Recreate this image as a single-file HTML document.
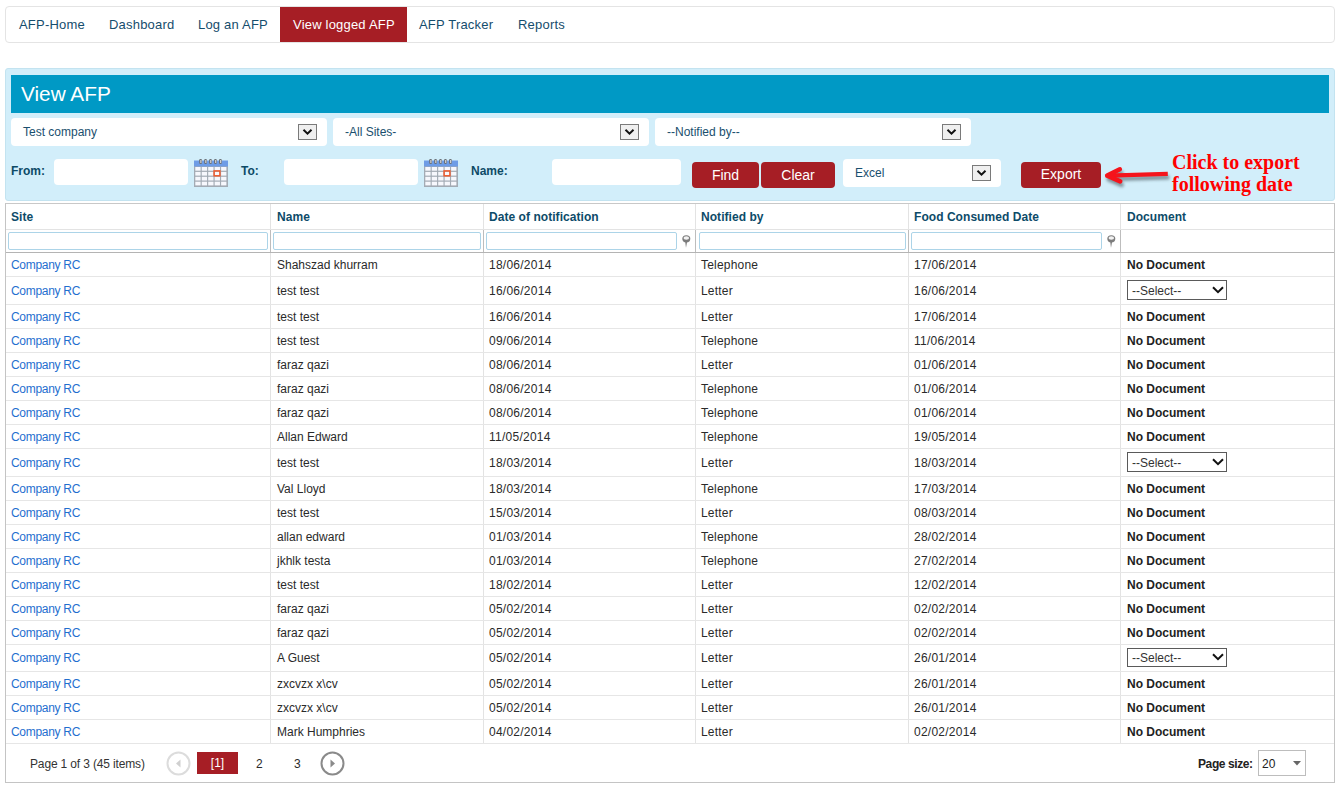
<!DOCTYPE html>
<html><head><meta charset="utf-8">
<style>
*{box-sizing:border-box;margin:0;padding:0}
html,body{width:1344px;height:788px;overflow:hidden;background:#fff;font-family:"Liberation Sans",sans-serif}
.abs{position:absolute}
#nav{left:5px;top:6px;width:1330px;height:37px;border:1px solid #e4e4e4;border-radius:4px;background:#fff}
.ni{position:absolute;top:0;height:35px;line-height:35px;font-size:13px;color:#154d6d;white-space:nowrap;letter-spacing:0.2px}
#tab{position:absolute;left:274px;top:0;width:127px;height:35px;background:#a61e25}
#panel{left:5px;top:68px;width:1330px;height:133px;background:#d2eefa;border:1px solid #c3e3f0;border-radius:3px}
#hdr{left:11px;top:75px;width:1318px;height:38px;background:#0099c5}
#hdr span{position:absolute;left:10px;top:0;line-height:38px;font-size:20.8px;color:#fff}
.sel{position:absolute;background:#fff;border-radius:4px;font-size:12px;color:#1a4f6e}
.sel .t{position:absolute;left:12px;top:0}
.dd{position:absolute;width:19px;height:16px;border:1px solid #7a7a7a;background:#efefef}
.dd svg{position:absolute;left:3px;top:3px}
.inp{position:absolute;background:#fff;border-radius:4px}
.lbl{position:absolute;font-size:12px;font-weight:bold;color:#0d4a66}
.btn{position:absolute;background:#a61e25;border-radius:4px;color:#fff;font-size:14px;text-align:center}
#note{left:1172px;top:151px;font-family:"Liberation Serif",serif;font-weight:bold;font-size:20px;line-height:22px;color:#f00}
#grid{left:5px;top:203px;width:1330px;height:580px;border:1px solid #c4c4c4;border-top-color:#c8c8c8;background:#fff}
.vl{position:absolute;top:0;width:1px;background:#e2e2e2}
.hl{position:absolute;left:0;height:1px;background:#e6e6e6}
.c{position:absolute;font-size:12px;color:#2a2a2a;white-space:nowrap;letter-spacing:-0.2px}
.h{position:absolute;font-size:12px;font-weight:bold;color:#0d4b69;white-space:nowrap;letter-spacing:0.05px}
.fi{position:absolute;height:18px;border:1px solid #acd4e8;border-radius:2px;background:#fff}
.lnk{color:#1f6fcf}
.nd{font-weight:bold;color:#222;letter-spacing:0}
.ds{position:absolute;width:100px;height:20px;border:1px solid #5a5a5a;background:#fff;font-size:12px;color:#333}
</style></head><body>
<div id="nav" class="abs">
  <div class="ni" style="left:13px">AFP-Home</div>
  <div class="ni" style="left:103px">Dashboard</div>
  <div class="ni" style="left:192px">Log an AFP</div>
  <div id="tab"></div>
  <div class="ni" style="left:287px;color:#fff">View logged AFP</div>
  <div class="ni" style="left:413px">AFP Tracker</div>
  <div class="ni" style="left:512px">Reports</div>
</div>

<div id="panel" class="abs"></div>
<div id="hdr" class="abs"><span>View AFP</span></div>

<div id="filters"><div class="sel" style="left:11px;top:118px;width:316px;height:28px;line-height:28px"><span class="t">Test company</span><div class="dd" style="left:287px;top:6px"><svg width="11" height="8" viewBox="0 0 11 8"><path d="M1.5 1.8 L5.5 5.6 L9.5 1.8" fill="none" stroke="#111" stroke-width="2"/></svg></div></div><div class="sel" style="left:333px;top:118px;width:316px;height:28px;line-height:28px"><span class="t">-All Sites-</span><div class="dd" style="left:287px;top:6px"><svg width="11" height="8" viewBox="0 0 11 8"><path d="M1.5 1.8 L5.5 5.6 L9.5 1.8" fill="none" stroke="#111" stroke-width="2"/></svg></div></div><div class="sel" style="left:655px;top:118px;width:316px;height:28px;line-height:28px"><span class="t">--Notified by--</span><div class="dd" style="left:287px;top:6px"><svg width="11" height="8" viewBox="0 0 11 8"><path d="M1.5 1.8 L5.5 5.6 L9.5 1.8" fill="none" stroke="#111" stroke-width="2"/></svg></div></div><div class="lbl" style="left:11px;top:164px">From:</div><div class="inp" style="left:54px;top:159px;width:134px;height:26px"></div><div class="abs" style="left:194px;top:159px"><svg width="34" height="28" viewBox="0 0 34 28"><rect x="0" y="6" width="34" height="22" fill="#a3abb4"/><rect x="0" y="1.5" width="34" height="6" fill="#6e9ce6"/><g fill="#f7f8fd"><rect x="1.30" y="8.00" width="5.3" height="3.7"/><rect x="7.75" y="8.00" width="5.3" height="3.7"/><rect x="14.20" y="8.00" width="5.3" height="3.7"/><rect x="20.65" y="8.00" width="5.3" height="3.7"/><rect x="27.10" y="8.00" width="5.3" height="3.7"/><rect x="1.30" y="12.90" width="5.3" height="3.7"/><rect x="7.75" y="12.90" width="5.3" height="3.7"/><rect x="14.20" y="12.90" width="5.3" height="3.7"/><rect x="20.65" y="12.90" width="5.3" height="3.7"/><rect x="27.10" y="12.90" width="5.3" height="3.7"/><rect x="1.30" y="17.80" width="5.3" height="3.7"/><rect x="7.75" y="17.80" width="5.3" height="3.7"/><rect x="14.20" y="17.80" width="5.3" height="3.7"/><rect x="20.65" y="17.80" width="5.3" height="3.7"/><rect x="27.10" y="17.80" width="5.3" height="3.7"/><rect x="1.30" y="22.70" width="5.3" height="3.7"/><rect x="7.75" y="22.70" width="5.3" height="3.7"/><rect x="14.20" y="22.70" width="5.3" height="3.7"/><rect x="20.65" y="22.70" width="5.3" height="3.7"/><rect x="27.10" y="22.70" width="5.3" height="3.7"/></g><rect x="20.1" y="11.9" width="5.8" height="4.9" fill="none" stroke="#ef5b2e" stroke-width="1.5"/><g fill="#6b7077"><rect x="5.20" y="0" width="2.8" height="5" rx="1.3"/><rect x="10.15" y="0" width="2.8" height="5" rx="1.3"/><rect x="15.10" y="0" width="2.8" height="5" rx="1.3"/><rect x="20.05" y="0" width="2.8" height="5" rx="1.3"/><rect x="25.00" y="0" width="2.8" height="5" rx="1.3"/></g><g fill="#e8e8e8"><rect x="6.40" y="1" width="1" height="3" /><rect x="11.35" y="1" width="1" height="3" /><rect x="16.30" y="1" width="1" height="3" /><rect x="21.25" y="1" width="1" height="3" /><rect x="26.20" y="1" width="1" height="3" /></g></svg></div><div class="lbl" style="left:241px;top:164px">To:</div><div class="inp" style="left:284px;top:159px;width:134px;height:26px"></div><div class="abs" style="left:424px;top:159px"><svg width="34" height="28" viewBox="0 0 34 28"><rect x="0" y="6" width="34" height="22" fill="#a3abb4"/><rect x="0" y="1.5" width="34" height="6" fill="#6e9ce6"/><g fill="#f7f8fd"><rect x="1.30" y="8.00" width="5.3" height="3.7"/><rect x="7.75" y="8.00" width="5.3" height="3.7"/><rect x="14.20" y="8.00" width="5.3" height="3.7"/><rect x="20.65" y="8.00" width="5.3" height="3.7"/><rect x="27.10" y="8.00" width="5.3" height="3.7"/><rect x="1.30" y="12.90" width="5.3" height="3.7"/><rect x="7.75" y="12.90" width="5.3" height="3.7"/><rect x="14.20" y="12.90" width="5.3" height="3.7"/><rect x="20.65" y="12.90" width="5.3" height="3.7"/><rect x="27.10" y="12.90" width="5.3" height="3.7"/><rect x="1.30" y="17.80" width="5.3" height="3.7"/><rect x="7.75" y="17.80" width="5.3" height="3.7"/><rect x="14.20" y="17.80" width="5.3" height="3.7"/><rect x="20.65" y="17.80" width="5.3" height="3.7"/><rect x="27.10" y="17.80" width="5.3" height="3.7"/><rect x="1.30" y="22.70" width="5.3" height="3.7"/><rect x="7.75" y="22.70" width="5.3" height="3.7"/><rect x="14.20" y="22.70" width="5.3" height="3.7"/><rect x="20.65" y="22.70" width="5.3" height="3.7"/><rect x="27.10" y="22.70" width="5.3" height="3.7"/></g><rect x="20.1" y="11.9" width="5.8" height="4.9" fill="none" stroke="#ef5b2e" stroke-width="1.5"/><g fill="#6b7077"><rect x="5.20" y="0" width="2.8" height="5" rx="1.3"/><rect x="10.15" y="0" width="2.8" height="5" rx="1.3"/><rect x="15.10" y="0" width="2.8" height="5" rx="1.3"/><rect x="20.05" y="0" width="2.8" height="5" rx="1.3"/><rect x="25.00" y="0" width="2.8" height="5" rx="1.3"/></g><g fill="#e8e8e8"><rect x="6.40" y="1" width="1" height="3" /><rect x="11.35" y="1" width="1" height="3" /><rect x="16.30" y="1" width="1" height="3" /><rect x="21.25" y="1" width="1" height="3" /><rect x="26.20" y="1" width="1" height="3" /></g></svg></div><div class="lbl" style="left:471px;top:164px">Name:</div><div class="inp" style="left:552px;top:159px;width:129px;height:26px"></div><div class="btn" style="left:692px;top:162px;width:67px;height:26px;line-height:26px">Find</div><div class="btn" style="left:761px;top:162px;width:74px;height:26px;line-height:26px">Clear</div><div class="sel" style="left:843px;top:159px;width:158px;height:28px;line-height:28px"><span class="t">Excel</span><div class="dd" style="left:129px;top:6px"><svg width="11" height="8" viewBox="0 0 11 8"><path d="M1.5 1.8 L5.5 5.6 L9.5 1.8" fill="none" stroke="#111" stroke-width="2"/></svg></div></div><div class="btn" style="left:1021px;top:162px;width:80px;height:26px;line-height:24px">Export</div><svg class="abs" style="left:1100px;top:160px" width="75" height="30" viewBox="0 0 75 30">
<defs><filter id="sh" x="-20%" y="-60%" width="140%" height="220%"><feGaussianBlur stdDeviation="1.8"/></filter></defs>
<g transform="translate(1.5,3.5)" filter="url(#sh)" opacity="0.55" fill="none" stroke="#3a4a50"><path d="M67.8 13.8 L9 15.6" stroke-width="4.2"/><path d="M19.8 9.3 L7.2 15.6 L20.2 21.4" stroke-width="4.6" stroke-linecap="round" stroke-linejoin="round"/></g>
<g fill="none" stroke="#f5141c"><path d="M67.8 13.8 L9 15.6" stroke-width="4.2"/><path d="M19.8 9.3 L7.2 15.6 L20.2 21.4" stroke-width="4.6" stroke-linecap="round" stroke-linejoin="round"/></g>
</svg></div>
<div id="note" class="abs">Click to export<br>following date</div>
<div id="grid" class="abs"></div>
<div class="h" style="left:11px;top:204px;height:26px;line-height:27px">Site</div><div class="h" style="left:277px;top:204px;height:26px;line-height:27px">Name</div><div class="h" style="left:489px;top:204px;height:26px;line-height:27px">Date of notification</div><div class="h" style="left:701px;top:204px;height:26px;line-height:27px">Notified by</div><div class="h" style="left:914px;top:204px;height:26px;line-height:27px">Food Consumed Date</div><div class="h" style="left:1127px;top:204px;height:26px;line-height:27px">Document</div><div class="abs" style="left:270px;top:204px;width:1px;height:540px;background:#e3e3e3"></div><div class="abs" style="left:483px;top:204px;width:1px;height:540px;background:#e3e3e3"></div><div class="abs" style="left:695px;top:204px;width:1px;height:540px;background:#e3e3e3"></div><div class="abs" style="left:908px;top:204px;width:1px;height:540px;background:#e3e3e3"></div><div class="abs" style="left:1120px;top:204px;width:1px;height:540px;background:#e3e3e3"></div><div class="abs" style="left:6px;top:229px;width:1328px;height:1px;background:#e3e3e3"></div><div class="fi" style="left:8px;top:232px;width:260px"></div><div class="fi" style="left:273px;top:232px;width:208px"></div><div class="fi" style="left:486px;top:232px;width:191px"></div><div class="fi" style="left:699px;top:232px;width:207px"></div><div class="fi" style="left:911px;top:232px;width:191px"></div><div class="abs" style="left:682px;top:235px"><svg width="10" height="14" viewBox="0 0 10 14"><ellipse cx="4.3" cy="3.8" rx="4" ry="3.6" fill="#7c7c7c"/><ellipse cx="4.3" cy="3.0" rx="2.8" ry="1.7" fill="#f2f2f2"/><path d="M3.1 5.8 L5.3 5.8 L4 12.8Z" fill="#7c7c7c"/></svg></div><div class="abs" style="left:1107px;top:235px"><svg width="10" height="14" viewBox="0 0 10 14"><ellipse cx="4.3" cy="3.8" rx="4" ry="3.6" fill="#7c7c7c"/><ellipse cx="4.3" cy="3.0" rx="2.8" ry="1.7" fill="#f2f2f2"/><path d="M3.1 5.8 L5.3 5.8 L4 12.8Z" fill="#7c7c7c"/></svg></div><div class="abs" style="left:6px;top:252px;width:1328px;height:1px;background:#b4b4b4"></div><div class="abs" style="left:270px;top:230px;width:1px;height:22px;background:#bdbdbd"></div><div class="abs" style="left:483px;top:230px;width:1px;height:22px;background:#bdbdbd"></div><div class="abs" style="left:695px;top:230px;width:1px;height:22px;background:#bdbdbd"></div><div class="abs" style="left:908px;top:230px;width:1px;height:22px;background:#bdbdbd"></div><div class="abs" style="left:1120px;top:230px;width:1px;height:22px;background:#bdbdbd"></div><div class="c lnk" style="left:11px;top:253px;height:24px;line-height:24px;letter-spacing:-0.3px">Company RC</div><div class="c " style="left:277px;top:253px;height:24px;line-height:24px;letter-spacing:0px">Shahszad khurram</div><div class="c " style="left:489px;top:253px;height:24px;line-height:24px;letter-spacing:0.25px">18/06/2014</div><div class="c " style="left:701px;top:253px;height:24px;line-height:24px;letter-spacing:0.2px">Telephone</div><div class="c " style="left:914px;top:253px;height:24px;line-height:24px;letter-spacing:0.25px">17/06/2014</div><div class="c nd" style="left:1127px;top:253px;height:24px;line-height:24px;letter-spacing:0px">No Document</div><div class="abs" style="left:6px;top:276px;width:1328px;height:1px;background:#e6e6e6"></div><div class="c lnk" style="left:11px;top:277px;height:28px;line-height:28px;letter-spacing:-0.3px">Company RC</div><div class="c " style="left:277px;top:277px;height:28px;line-height:28px;letter-spacing:0px">test test</div><div class="c " style="left:489px;top:277px;height:28px;line-height:28px;letter-spacing:0.25px">16/06/2014</div><div class="c " style="left:701px;top:277px;height:28px;line-height:28px;letter-spacing:0.2px">Letter</div><div class="c " style="left:914px;top:277px;height:28px;line-height:28px;letter-spacing:0.25px">16/06/2014</div><div class="ds" style="left:1127px;top:280px;height:20px"><span style="position:absolute;left:4px;top:1px;line-height:18px">--Select--</span><svg style="position:absolute;left:84px;top:5px" width="12" height="8" viewBox="0 0 12 8"><path d="M1 1.2 L6 6.2 L11 1.2" fill="none" stroke="#111" stroke-width="2"/></svg></div><div class="abs" style="left:6px;top:304px;width:1328px;height:1px;background:#e6e6e6"></div><div class="c lnk" style="left:11px;top:305px;height:24px;line-height:24px;letter-spacing:-0.3px">Company RC</div><div class="c " style="left:277px;top:305px;height:24px;line-height:24px;letter-spacing:0px">test test</div><div class="c " style="left:489px;top:305px;height:24px;line-height:24px;letter-spacing:0.25px">16/06/2014</div><div class="c " style="left:701px;top:305px;height:24px;line-height:24px;letter-spacing:0.2px">Letter</div><div class="c " style="left:914px;top:305px;height:24px;line-height:24px;letter-spacing:0.25px">17/06/2014</div><div class="c nd" style="left:1127px;top:305px;height:24px;line-height:24px;letter-spacing:0px">No Document</div><div class="abs" style="left:6px;top:328px;width:1328px;height:1px;background:#e6e6e6"></div><div class="c lnk" style="left:11px;top:329px;height:24px;line-height:24px;letter-spacing:-0.3px">Company RC</div><div class="c " style="left:277px;top:329px;height:24px;line-height:24px;letter-spacing:0px">test test</div><div class="c " style="left:489px;top:329px;height:24px;line-height:24px;letter-spacing:0.25px">09/06/2014</div><div class="c " style="left:701px;top:329px;height:24px;line-height:24px;letter-spacing:0.2px">Telephone</div><div class="c " style="left:914px;top:329px;height:24px;line-height:24px;letter-spacing:0.25px">11/06/2014</div><div class="c nd" style="left:1127px;top:329px;height:24px;line-height:24px;letter-spacing:0px">No Document</div><div class="abs" style="left:6px;top:352px;width:1328px;height:1px;background:#e6e6e6"></div><div class="c lnk" style="left:11px;top:353px;height:24px;line-height:24px;letter-spacing:-0.3px">Company RC</div><div class="c " style="left:277px;top:353px;height:24px;line-height:24px;letter-spacing:0px">faraz qazi</div><div class="c " style="left:489px;top:353px;height:24px;line-height:24px;letter-spacing:0.25px">08/06/2014</div><div class="c " style="left:701px;top:353px;height:24px;line-height:24px;letter-spacing:0.2px">Letter</div><div class="c " style="left:914px;top:353px;height:24px;line-height:24px;letter-spacing:0.25px">01/06/2014</div><div class="c nd" style="left:1127px;top:353px;height:24px;line-height:24px;letter-spacing:0px">No Document</div><div class="abs" style="left:6px;top:376px;width:1328px;height:1px;background:#e6e6e6"></div><div class="c lnk" style="left:11px;top:377px;height:24px;line-height:24px;letter-spacing:-0.3px">Company RC</div><div class="c " style="left:277px;top:377px;height:24px;line-height:24px;letter-spacing:0px">faraz qazi</div><div class="c " style="left:489px;top:377px;height:24px;line-height:24px;letter-spacing:0.25px">08/06/2014</div><div class="c " style="left:701px;top:377px;height:24px;line-height:24px;letter-spacing:0.2px">Telephone</div><div class="c " style="left:914px;top:377px;height:24px;line-height:24px;letter-spacing:0.25px">01/06/2014</div><div class="c nd" style="left:1127px;top:377px;height:24px;line-height:24px;letter-spacing:0px">No Document</div><div class="abs" style="left:6px;top:400px;width:1328px;height:1px;background:#e6e6e6"></div><div class="c lnk" style="left:11px;top:401px;height:24px;line-height:24px;letter-spacing:-0.3px">Company RC</div><div class="c " style="left:277px;top:401px;height:24px;line-height:24px;letter-spacing:0px">faraz qazi</div><div class="c " style="left:489px;top:401px;height:24px;line-height:24px;letter-spacing:0.25px">08/06/2014</div><div class="c " style="left:701px;top:401px;height:24px;line-height:24px;letter-spacing:0.2px">Telephone</div><div class="c " style="left:914px;top:401px;height:24px;line-height:24px;letter-spacing:0.25px">01/06/2014</div><div class="c nd" style="left:1127px;top:401px;height:24px;line-height:24px;letter-spacing:0px">No Document</div><div class="abs" style="left:6px;top:424px;width:1328px;height:1px;background:#e6e6e6"></div><div class="c lnk" style="left:11px;top:425px;height:24px;line-height:24px;letter-spacing:-0.3px">Company RC</div><div class="c " style="left:277px;top:425px;height:24px;line-height:24px;letter-spacing:0px">Allan Edward</div><div class="c " style="left:489px;top:425px;height:24px;line-height:24px;letter-spacing:0.25px">11/05/2014</div><div class="c " style="left:701px;top:425px;height:24px;line-height:24px;letter-spacing:0.2px">Telephone</div><div class="c " style="left:914px;top:425px;height:24px;line-height:24px;letter-spacing:0.25px">19/05/2014</div><div class="c nd" style="left:1127px;top:425px;height:24px;line-height:24px;letter-spacing:0px">No Document</div><div class="abs" style="left:6px;top:448px;width:1328px;height:1px;background:#e6e6e6"></div><div class="c lnk" style="left:11px;top:449px;height:28px;line-height:28px;letter-spacing:-0.3px">Company RC</div><div class="c " style="left:277px;top:449px;height:28px;line-height:28px;letter-spacing:0px">test test</div><div class="c " style="left:489px;top:449px;height:28px;line-height:28px;letter-spacing:0.25px">18/03/2014</div><div class="c " style="left:701px;top:449px;height:28px;line-height:28px;letter-spacing:0.2px">Letter</div><div class="c " style="left:914px;top:449px;height:28px;line-height:28px;letter-spacing:0.25px">18/03/2014</div><div class="ds" style="left:1127px;top:452px;height:20px"><span style="position:absolute;left:4px;top:1px;line-height:18px">--Select--</span><svg style="position:absolute;left:84px;top:5px" width="12" height="8" viewBox="0 0 12 8"><path d="M1 1.2 L6 6.2 L11 1.2" fill="none" stroke="#111" stroke-width="2"/></svg></div><div class="abs" style="left:6px;top:476px;width:1328px;height:1px;background:#e6e6e6"></div><div class="c lnk" style="left:11px;top:477px;height:24px;line-height:24px;letter-spacing:-0.3px">Company RC</div><div class="c " style="left:277px;top:477px;height:24px;line-height:24px;letter-spacing:0px">Val Lloyd</div><div class="c " style="left:489px;top:477px;height:24px;line-height:24px;letter-spacing:0.25px">18/03/2014</div><div class="c " style="left:701px;top:477px;height:24px;line-height:24px;letter-spacing:0.2px">Telephone</div><div class="c " style="left:914px;top:477px;height:24px;line-height:24px;letter-spacing:0.25px">17/03/2014</div><div class="c nd" style="left:1127px;top:477px;height:24px;line-height:24px;letter-spacing:0px">No Document</div><div class="abs" style="left:6px;top:500px;width:1328px;height:1px;background:#e6e6e6"></div><div class="c lnk" style="left:11px;top:501px;height:24px;line-height:24px;letter-spacing:-0.3px">Company RC</div><div class="c " style="left:277px;top:501px;height:24px;line-height:24px;letter-spacing:0px">test test</div><div class="c " style="left:489px;top:501px;height:24px;line-height:24px;letter-spacing:0.25px">15/03/2014</div><div class="c " style="left:701px;top:501px;height:24px;line-height:24px;letter-spacing:0.2px">Letter</div><div class="c " style="left:914px;top:501px;height:24px;line-height:24px;letter-spacing:0.25px">08/03/2014</div><div class="c nd" style="left:1127px;top:501px;height:24px;line-height:24px;letter-spacing:0px">No Document</div><div class="abs" style="left:6px;top:524px;width:1328px;height:1px;background:#e6e6e6"></div><div class="c lnk" style="left:11px;top:525px;height:24px;line-height:24px;letter-spacing:-0.3px">Company RC</div><div class="c " style="left:277px;top:525px;height:24px;line-height:24px;letter-spacing:0px">allan edward</div><div class="c " style="left:489px;top:525px;height:24px;line-height:24px;letter-spacing:0.25px">01/03/2014</div><div class="c " style="left:701px;top:525px;height:24px;line-height:24px;letter-spacing:0.2px">Telephone</div><div class="c " style="left:914px;top:525px;height:24px;line-height:24px;letter-spacing:0.25px">28/02/2014</div><div class="c nd" style="left:1127px;top:525px;height:24px;line-height:24px;letter-spacing:0px">No Document</div><div class="abs" style="left:6px;top:548px;width:1328px;height:1px;background:#e6e6e6"></div><div class="c lnk" style="left:11px;top:549px;height:24px;line-height:24px;letter-spacing:-0.3px">Company RC</div><div class="c " style="left:277px;top:549px;height:24px;line-height:24px;letter-spacing:0px">jkhlk testa</div><div class="c " style="left:489px;top:549px;height:24px;line-height:24px;letter-spacing:0.25px">01/03/2014</div><div class="c " style="left:701px;top:549px;height:24px;line-height:24px;letter-spacing:0.2px">Telephone</div><div class="c " style="left:914px;top:549px;height:24px;line-height:24px;letter-spacing:0.25px">27/02/2014</div><div class="c nd" style="left:1127px;top:549px;height:24px;line-height:24px;letter-spacing:0px">No Document</div><div class="abs" style="left:6px;top:572px;width:1328px;height:1px;background:#e6e6e6"></div><div class="c lnk" style="left:11px;top:573px;height:24px;line-height:24px;letter-spacing:-0.3px">Company RC</div><div class="c " style="left:277px;top:573px;height:24px;line-height:24px;letter-spacing:0px">test test</div><div class="c " style="left:489px;top:573px;height:24px;line-height:24px;letter-spacing:0.25px">18/02/2014</div><div class="c " style="left:701px;top:573px;height:24px;line-height:24px;letter-spacing:0.2px">Letter</div><div class="c " style="left:914px;top:573px;height:24px;line-height:24px;letter-spacing:0.25px">12/02/2014</div><div class="c nd" style="left:1127px;top:573px;height:24px;line-height:24px;letter-spacing:0px">No Document</div><div class="abs" style="left:6px;top:596px;width:1328px;height:1px;background:#e6e6e6"></div><div class="c lnk" style="left:11px;top:597px;height:24px;line-height:24px;letter-spacing:-0.3px">Company RC</div><div class="c " style="left:277px;top:597px;height:24px;line-height:24px;letter-spacing:0px">faraz qazi</div><div class="c " style="left:489px;top:597px;height:24px;line-height:24px;letter-spacing:0.25px">05/02/2014</div><div class="c " style="left:701px;top:597px;height:24px;line-height:24px;letter-spacing:0.2px">Letter</div><div class="c " style="left:914px;top:597px;height:24px;line-height:24px;letter-spacing:0.25px">02/02/2014</div><div class="c nd" style="left:1127px;top:597px;height:24px;line-height:24px;letter-spacing:0px">No Document</div><div class="abs" style="left:6px;top:620px;width:1328px;height:1px;background:#e6e6e6"></div><div class="c lnk" style="left:11px;top:621px;height:24px;line-height:24px;letter-spacing:-0.3px">Company RC</div><div class="c " style="left:277px;top:621px;height:24px;line-height:24px;letter-spacing:0px">faraz qazi</div><div class="c " style="left:489px;top:621px;height:24px;line-height:24px;letter-spacing:0.25px">05/02/2014</div><div class="c " style="left:701px;top:621px;height:24px;line-height:24px;letter-spacing:0.2px">Letter</div><div class="c " style="left:914px;top:621px;height:24px;line-height:24px;letter-spacing:0.25px">02/02/2014</div><div class="c nd" style="left:1127px;top:621px;height:24px;line-height:24px;letter-spacing:0px">No Document</div><div class="abs" style="left:6px;top:644px;width:1328px;height:1px;background:#e6e6e6"></div><div class="c lnk" style="left:11px;top:645px;height:27px;line-height:27px;letter-spacing:-0.3px">Company RC</div><div class="c " style="left:277px;top:645px;height:27px;line-height:27px;letter-spacing:0px">A Guest</div><div class="c " style="left:489px;top:645px;height:27px;line-height:27px;letter-spacing:0.25px">05/02/2014</div><div class="c " style="left:701px;top:645px;height:27px;line-height:27px;letter-spacing:0.2px">Letter</div><div class="c " style="left:914px;top:645px;height:27px;line-height:27px;letter-spacing:0.25px">26/01/2014</div><div class="ds" style="left:1127px;top:648px;height:19px"><span style="position:absolute;left:4px;top:0px;line-height:18px">--Select--</span><svg style="position:absolute;left:84px;top:4px" width="12" height="8" viewBox="0 0 12 8"><path d="M1 1.2 L6 6.2 L11 1.2" fill="none" stroke="#111" stroke-width="2"/></svg></div><div class="abs" style="left:6px;top:671px;width:1328px;height:1px;background:#e6e6e6"></div><div class="c lnk" style="left:11px;top:672px;height:24px;line-height:24px;letter-spacing:-0.3px">Company RC</div><div class="c " style="left:277px;top:672px;height:24px;line-height:24px;letter-spacing:0px">zxcvzx x\cv</div><div class="c " style="left:489px;top:672px;height:24px;line-height:24px;letter-spacing:0.25px">05/02/2014</div><div class="c " style="left:701px;top:672px;height:24px;line-height:24px;letter-spacing:0.2px">Letter</div><div class="c " style="left:914px;top:672px;height:24px;line-height:24px;letter-spacing:0.25px">26/01/2014</div><div class="c nd" style="left:1127px;top:672px;height:24px;line-height:24px;letter-spacing:0px">No Document</div><div class="abs" style="left:6px;top:695px;width:1328px;height:1px;background:#e6e6e6"></div><div class="c lnk" style="left:11px;top:696px;height:24px;line-height:24px;letter-spacing:-0.3px">Company RC</div><div class="c " style="left:277px;top:696px;height:24px;line-height:24px;letter-spacing:0px">zxcvzx x\cv</div><div class="c " style="left:489px;top:696px;height:24px;line-height:24px;letter-spacing:0.25px">05/02/2014</div><div class="c " style="left:701px;top:696px;height:24px;line-height:24px;letter-spacing:0.2px">Letter</div><div class="c " style="left:914px;top:696px;height:24px;line-height:24px;letter-spacing:0.25px">26/01/2014</div><div class="c nd" style="left:1127px;top:696px;height:24px;line-height:24px;letter-spacing:0px">No Document</div><div class="abs" style="left:6px;top:719px;width:1328px;height:1px;background:#e6e6e6"></div><div class="c lnk" style="left:11px;top:720px;height:24px;line-height:24px;letter-spacing:-0.3px">Company RC</div><div class="c " style="left:277px;top:720px;height:24px;line-height:24px;letter-spacing:0px">Mark Humphries</div><div class="c " style="left:489px;top:720px;height:24px;line-height:24px;letter-spacing:0.25px">04/02/2014</div><div class="c " style="left:701px;top:720px;height:24px;line-height:24px;letter-spacing:0.2px">Letter</div><div class="c " style="left:914px;top:720px;height:24px;line-height:24px;letter-spacing:0.25px">02/02/2014</div><div class="c nd" style="left:1127px;top:720px;height:24px;line-height:24px;letter-spacing:0px">No Document</div><div class="abs" style="left:6px;top:743px;width:1328px;height:1px;background:#e6e6e6"></div><div class="c" style="left:30px;top:753px;line-height:22px;color:#333;letter-spacing:-0.15px">Page 1 of 3 (45 items)</div><svg class="abs" style="left:166px;top:751px" width="26" height="26" viewBox="0 0 26 26"><circle cx="12.5" cy="12.5" r="11" fill="none" stroke="#dcdcdc" stroke-width="2"/><path d="M14.5 8.5 L10 12.5 L14.5 16.5Z" fill="#d0d0d0"/></svg><div class="abs" style="left:197px;top:752px;width:41px;height:22px;background:#a61e25;color:#fff;font-size:12px;line-height:22px;text-align:center">[1]</div><div class="c" style="left:256px;top:753px;line-height:22px;letter-spacing:0">2</div><div class="c" style="left:294px;top:753px;line-height:22px;letter-spacing:0">3</div><svg class="abs" style="left:320px;top:751px" width="26" height="26" viewBox="0 0 26 26"><circle cx="12.5" cy="12.5" r="11" fill="none" stroke="#8a8a8a" stroke-width="2"/><path d="M10.5 8.5 L15 12.5 L10.5 16.5Z" fill="#8a8a8a"/></svg><div class="h" style="left:1198px;top:753px;line-height:22px;color:#222;letter-spacing:-0.4px">Page size:</div><div class="abs" style="left:1258px;top:750px;width:48px;height:26px;border:1px solid #bdbdbd;background:#fff"><span style="position:absolute;left:3px;top:1px;line-height:24px;font-size:12px;color:#222">20</span><svg style="position:absolute;left:34px;top:10px" width="8" height="5" viewBox="0 0 8 5"><path d="M0 0 L8 0 L4 4.5Z" fill="#666"/></svg></div>
</body></html>
